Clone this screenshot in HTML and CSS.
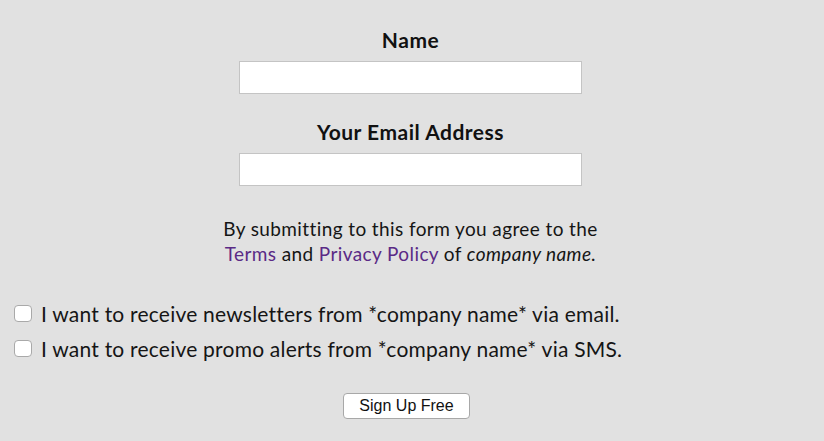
FILE: index.html
```html
<!DOCTYPE html>
<html>
<head>
<meta charset="utf-8">
<link rel="stylesheet" href="styles.css">
</head>
<body>
<form class="signup">
  <div class="field">
    <label class="label" for="name">Name</label>
    <input class="text-input" id="name" type="text">
  </div>
  <div class="field">
    <label class="label" for="email">Your Email Address</label>
    <input class="text-input" id="email" type="email">
  </div>
  <p class="terms">By submitting to this form you agree to the<br><a href="#" class="link">Terms</a> and <a href="#" class="link">Privacy Policy</a> of <em>company name.</em></p>
  <div class="checks">
    <label class="check"><span class="box"></span>I want to receive newsletters from *company name* via email.</label>
    <label class="check"><span class="box"></span>I want to receive promo alerts from *company name* via SMS.</label>
  </div>
  <div class="actions">
    <button type="button" class="btn">Sign Up Free</button>
  </div>
</form>
</body>
</html>
```
FILE: styles.css
```css
html, body {
  margin: 0;
  padding: 0;
  background: #e1e1e1;
}
body {
  font-family: Lato, "Open Sans", sans-serif;
  color: #111;
  width: 824px;
  height: 441px;
  overflow: hidden;
}
.signup {
  display: flex;
  flex-direction: column;
  padding-top: 26px;
}
.field {
  display: flex;
  flex-direction: column;
  align-items: center;
  padding-right: 3px;
  margin-bottom: 24px;
}
.field + .field { margin-bottom: 30px; }
.label {
  font-weight: 700;
  font-size: 21px;
  letter-spacing: 0.5px;
  line-height: 28px;
  margin-bottom: 7px;
}
.text-input {
  box-sizing: border-box;
  width: 343px;
  height: 33px;
  border: 1px solid #c4c4c4;
  background: #fff;
  margin: 0;
  padding: 0;
}
.terms {
  margin: 0;
  text-align: center;
  font-size: 19px;
  letter-spacing: 0.4px;
  line-height: 25px;
  padding-right: 3px;
  color: #151515;
}
.link {
  color: #5a2a86;
  text-decoration: none;
}
.checks {
  display: flex;
  flex-direction: column;
  gap: 10px;
  padding-left: 14px;
  margin-top: 35px;
}
.check {
  display: flex;
  align-items: center;
  font-size: 21px;
  letter-spacing: 0.22px;
  line-height: 25px;
  color: #151515;
}
.box {
  box-sizing: border-box;
  width: 18px;
  height: 17px;
  border: 1px solid #a9a9a9;
  border-radius: 4px;
  background: #fff;
  margin-right: 9px;
  flex: none;
}
.actions {
  display: flex;
  justify-content: center;
  margin-top: 32px;
  padding-right: 11px;
}
.btn {
  box-sizing: border-box;
  width: 127px;
  height: 26px;
  font-family: "Liberation Sans", Arial, sans-serif;
  font-size: 16px;
  color: #111;
  background: #fff;
  border: 1px solid #a8a8a8;
  border-radius: 4px;
  padding: 0;
}
```
